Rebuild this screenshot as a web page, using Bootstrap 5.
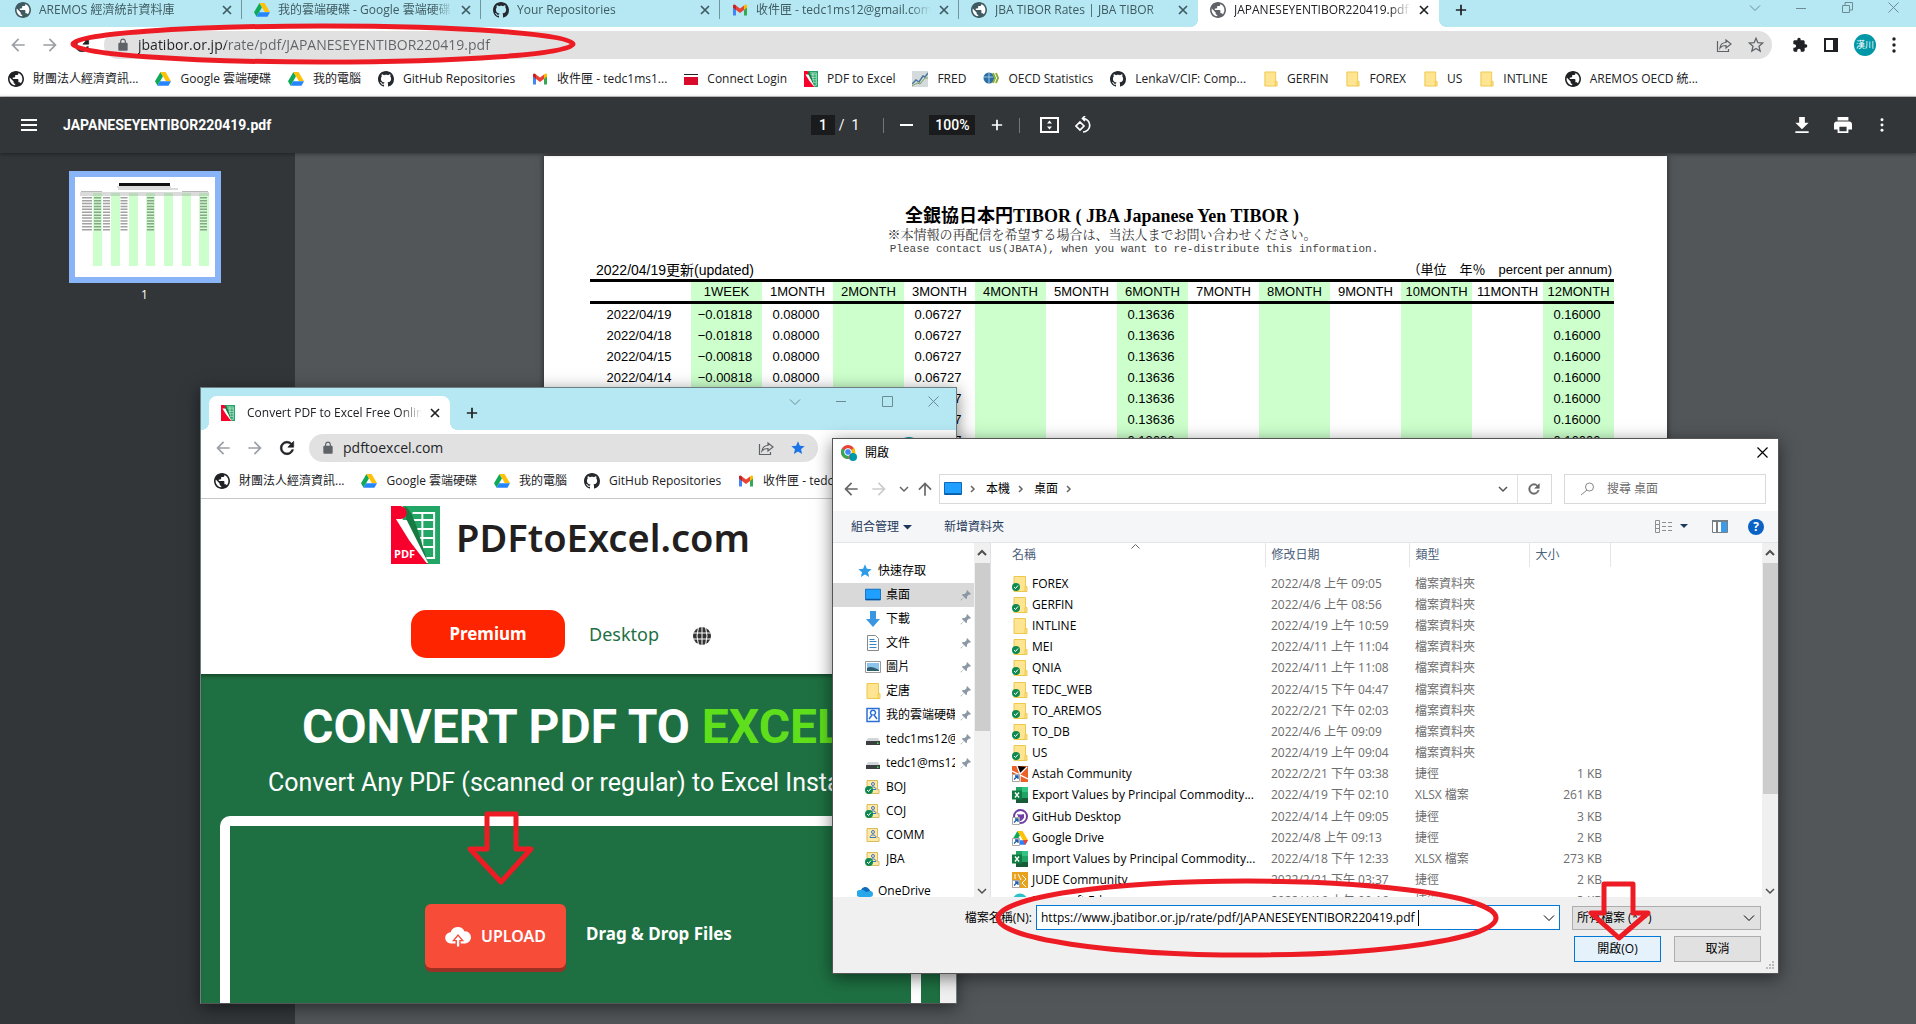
<!DOCTYPE html>
<html lang="zh-Hant">
<head>
<meta charset="utf-8">
<meta name="viewport" content="width=device-width, initial-scale=1">
<title>JAPANESEYENTIBOR220419.pdf</title>
<link href="https://cdn.jsdelivr.net/npm/bootstrap@5.3.0/dist/css/bootstrap.min.css" rel="stylesheet">
<style>
:root{--strip:#b5e8f3;--ink:#202124;--line:#d9d9d9}
body{font-family:"Open Sans","Noto Sans CJK TC",sans-serif;font-size:12px;line-height:16px;color:var(--ink);background:#525659}
svg{display:block;flex:none}
a{color:inherit;text-decoration:none}
button{font:inherit;color:inherit;border:0;background:none;padding:0}
.desk{height:100vh}
.i16{width:16px;height:16px}.i20{width:20px;height:20px}
/* browser chrome */
.strip{background:var(--strip);height:27px;padding-left:3px}
.tabx{width:239px;height:19px;padding:0 9px 0 12px;color:#3f5a61;border-right:1px solid #6f969e;white-space:nowrap}
.tabx .ttl,.tab-on .ttl{flex:1 1 0;min-width:0;overflow:hidden;-webkit-mask-image:linear-gradient(90deg,#000 88%,transparent);mask-image:linear-gradient(90deg,#000 88%,transparent)}
.tabx:nth-child(5){border-color:transparent}
.tab-on{width:241px;padding:0 10px 0 12px;background:#fff;position:relative;white-space:nowrap}
.tab-on::before,.tab-on::after{content:"";position:absolute;bottom:0;width:8px;height:8px}
.tab-on::before{left:-8px;background:radial-gradient(circle at 0 0,var(--strip) 8px,#fff 8px)}
.tab-on::after{right:-8px;background:radial-gradient(circle at 100% 0,var(--strip) 8px,#fff 8px)}
.ctl{width:46px;color:#6c8b92}
.ctl svg{margin:auto}
.bar{height:36px;background:#fff}
.omni{height:28px;border-radius:14px;background:#e1e1e1;color:#5f6368}
.omni input{border:0;background:transparent;outline:0;font-size:14px;line-height:20px;padding:0;min-width:0}
.url-split{background-image:linear-gradient(90deg,#202124 88px,#5f6368 88px)!important;-webkit-background-clip:text!important;background-clip:text!important;color:transparent}
.marks{height:34px;background:#fff;border-bottom:1px solid #c8c8c8;padding:0 8px 2px;gap:17px;white-space:nowrap;overflow:hidden}
.marks a{display:flex;align-items:center;gap:9px}
/* pdf viewer */
.viewer-bar{height:56px;background:#323639;color:#fff;font:700 14px/20px Roboto,sans-serif;box-shadow:0 1px 4px rgba(0,0,0,.4);z-index:1;position:relative}
.viewer-bar input{background:#191b1c;border:0;color:#fff;text-align:center;height:20px;padding:0;font:500 14px/20px Roboto,sans-serif}
.vsep{width:1px;height:15px;background:#73777a}
.side{width:295px;background:#323639;color:#fff;padding:18px 6px 0 0}
.thumb{border:6px solid #8ab4f8;width:152px;height:112px;background:#fff}
.paper{width:1123px;height:794px;background:#fff;margin-top:3px;box-shadow:0 0 6px rgba(0,0,0,.6);padding:50px 53px 0 46px;color:#000}
.paper h1{font:700 18px/20px "Liberation Serif","Noto Sans CJK JP",serif;margin:0}
.jp-note{font:13px/16px "Noto Serif CJK JP","Noto Sans CJK JP",sans-serif;color:#333}
.en-note{font:11px/15px "Liberation Mono",monospace;color:#444}
.cap{font:13px/18px "Liberation Sans","Noto Sans CJK JP",sans-serif;padding:0 2px 0 6px}
.cap .upd{font-size:14px}
.rates{width:1024px;table-layout:fixed;font:13px/21px "Liberation Sans",sans-serif;text-align:center;border-top:3px solid #000}
.rates th{font-weight:400;line-height:19px;border-bottom:3px solid #000;padding:0}
.rates td{padding:0 3px 0 0;height:21px}
.rates th:first-child{width:101px}
.rates :is(td,th):nth-child(even){background:#cfc}
/* floating windows */
.win{position:absolute;box-shadow:0 4px 16px rgba(0,0,0,.5)}
.win-web{left:200px;top:387px;width:757px;height:617px;border:1px solid #6d7f83;border-bottom-color:#555;background:#fff}
.win-web .strip{height:42px;padding:8px 0 0 8px}
.win-web .tab-on{border-radius:8px 8px 0 0}
.win-web .marks{height:33px;padding-left:13px}
.site-head{height:175px;padding-top:7px}
.brand{font:600 38px/58px "Noto Sans",sans-serif;color:#231f20;padding-top:2px}
.site-nav{margin-top:44px;padding-left:210px;color:#1e7042;font:18px/26px "Noto Sans",sans-serif}
.btn-prem{width:154px;height:48px;border-radius:15px;background:#ff2400;color:#fff;font-size:17px;font-weight:700}
.site-nav .earth{margin-left:34px}
.hero{background:#1e7042;color:#fff;font-family:Roboto,sans-serif;box-shadow:inset 0 4px 4px -2px rgba(0,0,0,.4);white-space:nowrap;overflow:hidden;min-width:0}
.hero h2{font:700 48px/56px Roboto,sans-serif;margin:25px 0 0 101px}
.hero p{font-size:25px;line-height:32px;margin:12px 0 0 67px}
.drop{margin:17px 19px 0 19px;border:10px solid #fff;border-radius:10px;height:260px;padding:78px 0 0 195px;font:700 17px/28px "Noto Sans",sans-serif}
.btn-up{width:141px;height:64px;border-radius:6px;background:#f64c38;box-shadow:0 4px 0 #9c3023;color:#fff;font:600 16px/22px "Noto Sans",sans-serif}
.sbar{background:#f0f0f0;width:16px;color:#505050}
.sbar i{display:block;width:15px;background:#cdcdcd}
.dlg{left:832px;top:438px;width:947px;height:536px;border:1px solid #555;background:#fff;color:#000}
.dlg input{border:0;outline:0;padding:0;background:transparent}
.box{border:1px solid var(--line);height:30px}
.cmd{height:32px;background:#f5f6f7;border-bottom:1px solid #e4e5e6;color:#1e395b;padding:0 14px}
.nav-pane{width:141px;padding-top:16px;overflow:hidden}
.nav-pane a{display:flex;align-items:center;gap:5px;height:24px;padding:0 2px 0 32px;white-space:nowrap}
.nav-pane a span{flex:1;overflow:hidden}
.nav-pane a.top{padding-left:24px}
.nav-pane a.sel{background:#d9d9d9}
.files{width:619px;table-layout:fixed;white-space:nowrap;height:369px}
.files th{font-weight:400;color:#4c607a;height:24px;padding:0 6px;border-right:1px solid #e5e5e5}
.files td{padding:0 6px;color:#6d6d6d}
.files td:first-child{color:#000}
.files th:first-child,.files td:first-child{padding-left:21px}
.files td:last-child{text-align:right;padding-right:8px}
.files tr.gap td{height:6px}
.fname{display:flex;align-items:center;gap:4px;margin-right:-4px}
.foot{background:#f0f0f0;height:76px;position:relative;padding:8px 17px 0 0}
.foot .combo{width:524px;height:25px;border:1px solid #0078d7;background:#fff}
.foot select{width:189px;height:24px;border:1px solid #adadad;background:#e1e1e1;appearance:none;padding:0 4px;border-radius:0;color:#000}
.foot .acts{margin-top:6px;gap:13px}
.foot .push{width:87px;height:26px;border:1px solid #adadad;background:#e1e1e1}
.foot .push.go{border-color:#0078d7;background:#e5f1fb}
.over{position:absolute;left:0;top:0;pointer-events:none}
</style>
<script src="https://cdn.jsdelivr.net/npm/bootstrap@5.3.0/dist/js/bootstrap.bundle.min.js"></script>
</head>
<body>
<svg width="0" height="0" class="position-absolute" aria-hidden="true">
<symbol id="globe" viewBox="2 2 20 20"><circle cx="12" cy="12" r="9" fill="#fff"/><path fill="currentColor" d="M12 2C6.48 2 2 6.48 2 12s4.48 10 10 10 10-4.480 10-10S17.520 2 12 2zm-1 17.930c-3.950-.49-7-3.850-7-7.930 0-.62.08-1.210.21-1.790L9 15v1c0 1.100.9 2 2 2v1.930zm6.900-2.540c-.26-.81-1-1.390-1.900-1.390h-1v-3c0-.55-.45-1-1-1H8v-2h2c.55 0 1-.45 1-1V7h2c1.100 0 2-.9 2-2v-.41c2.930 1.190 5 4.060 5 7.410 0 2.080-.8 3.970-2.100 5.390z"/></symbol>
<symbol id="drive" viewBox="0 0 88 80"><path fill="#0fa958" d="M30 1 0 53l14 24 30-52z"/><path fill="#ffc107" d="M30 1h28l30 52H60z"/><path fill="#2684fc" d="M28 53h60L74 77H14z"/></symbol>
<symbol id="git" viewBox="0 0 16 16"><path fill="#24292f" d="M8 0C3.580 0 0 3.580 0 8c0 3.540 2.290 6.530 5.470 7.590.4.070.55-.17.55-.38 0-.19-.01-.82-.01-1.490-2.010.37-2.530-.49-2.690-.94-.09-.23-.48-.94-.82-1.130-.28-.15-.68-.52-.01-.53.63-.01 1.080.58 1.230.82.72 1.210 1.870.87 2.330.66.070-.52.28-.87.51-1.070-1.780-.2-3.640-.89-3.640-3.950 0-.87.31-1.590.82-2.150-.08-.2-.36-1.020.08-2.120 0 0 .67-.21 2.200.82.64-.18 1.320-.27 2-.27s1.360.09 2 .27c1.530-1.040 2.200-.82 2.200-.82.44 1.100.16 1.920.08 2.120.51.56.82 1.270.82 2.150 0 3.070-1.870 3.750-3.650 3.950.29.25.54.73.54 1.480 0 1.070-.01 1.930-.01 2.200 0 .21.15.46.55.38A8.010 8.010 0 0 0 16 8c0-4.420-3.580-8-8-8z"/></symbol>
<symbol id="mail" viewBox="0 0 16 16"><path fill="#4285f4" d="M1 4v9.500h3V7z"/><path fill="#34a853" d="M12 7v6.500h3V4z"/><path fill="#ea4335" d="M4 3.500 8 6.500l4-3V8l-4 3-4-3z"/><path fill="#c5221f" d="M1 4c0-1.500 1.500-2 3-.5V8L1 5.500z"/><path fill="#fbbc04" d="M15 4c0-1.500-1.500-2-3-.5V8l3-2.500z"/></symbol>
<symbol id="pdfx" viewBox="0 0 50 58" preserveAspectRatio="none"><path fill="#22a565" d="M12 0h38v58H12z"/><path fill="none" stroke="#fff" stroke-width="2" d="M22 7h22v45H32M20 14h24M24 23h20M26 32h18M30 41h14M32 7v44"/><path fill="#167a43" d="M14 0c6 4 8 10 12 20l12 38H20z"/><path fill="#fff" d="M6 14h10l22 43H20z"/><path fill="#f8002c" d="M0 0h10c8 2 8 12 0 13H5l14 22 18 23H0z"/></symbol>
<symbol id="folder" viewBox="0 0 16 16"><path fill="#ffe591" stroke="#ecc84d" d="M2 .5h11.500v10h1.500v5H2z"/><path fill="none" stroke="#ecc84d" d="M13 10.500v5"/></symbol>
<symbol id="tick" viewBox="0 0 16 16"><circle cx="4" cy="11" r="4" fill="#0e8a50"/><path d="m2 11 1.500 1.500L6 9.500" stroke="#fff" fill="none"/></symbol>
<symbol id="fshare" viewBox="0 0 16 16"><path fill="#ffe9a5" stroke="#d9bb5d" d="M2 1.500h10.500v9H14v4H2z"/><circle cx="8" cy="5" r="1.500" fill="none" stroke="#3b78c9"/><path fill="none" stroke="#3b78c9" d="M5 10.500c0-3.500 6-3.500 6 0z"/></symbol>
<symbol id="desk" viewBox="0 0 18 14"><path fill="#1f9fff" stroke="#0b69b7" d="M.5.5h17v12H.5z"/><path stroke="#0957a0" stroke-width="1.500" d="M1 12h16"/></symbol>
<symbol id="pin" viewBox="0 0 12 12"><path fill="#8b98a3" d="M7 1l4 4-1 .7-1-.2-2 2 0 2L6 10 4 8l-3 3.500L.5 11 4 8 2 6l.7-1h2l2-2L6.500 2z"/></symbol>
<symbol id="disk" viewBox="0 0 16 16"><path fill="#d3d6d9" d="m3 7-2 3h14l-2-3z"/><path fill="#3b3f42" d="M1 10h14v4H1z"/><path fill="#3ef04a" d="M12 11.500h1.500V13H12z"/></symbol>
<symbol id="xls" viewBox="0 0 16 16"><path fill="#21a366" d="M4 0h12v16H4z"/><path fill="#33c481" d="M10 0h6v5h-6z"/><path fill="#185c37" d="M4 11h12v5H4z"/><path fill="#107c41" d="M0 3.500h10v9H0z"/><path stroke="#fff" stroke-width="1.400" d="m3 5.500 4 5m0-5-4 5"/></symbol>
<symbol id="lnk" viewBox="0 0 16 16"><path fill="#fff" stroke="#a9a9a9" d="M.5 8.500h7v7h-7z"/><path fill="none" stroke="#1d5fa8" stroke-width="1.300" d="M2 13.500 5.500 10M3 10h3v3"/></symbol>
<symbol id="x" viewBox="0 0 10 10"><path stroke="currentColor" stroke-width="1.700" d="m1 1 8 8m0-8L1 9"/></symbol>
<symbol id="plus" viewBox="0 0 14 14"><path stroke="currentColor" stroke-width="2" d="M7 1v12M1 7h12"/></symbol>
<symbol id="back" viewBox="0 0 24 24"><path fill="currentColor" d="M20 11H7.800l5.600-5.600L12 4l-8 8 8 8 1.400-1.400L7.800 13H20z"/></symbol>
<symbol id="fwd" viewBox="0 0 24 24"><path fill="currentColor" d="m12 4-1.400 1.400 5.600 5.600H4v2h12.200l-5.600 5.600L12 20l8-8z"/></symbol>
<symbol id="reload" viewBox="0 0 24 24"><path fill="currentColor" stroke="currentColor" stroke-width=".8" d="M17.650 6.350C16.200 4.900 14.210 4 12 4c-4.420 0-7.990 3.580-7.990 8s3.570 8 7.990 8c3.730 0 6.840-2.550 7.730-6h-2.080c-.82 2.330-3.040 4-5.650 4-3.310 0-6-2.690-6-6s2.690-6 6-6c1.660 0 3.140.69 4.220 1.780L13 11h7V4z"/></symbol>
<symbol id="lock" viewBox="0 0 24 24"><path fill="currentColor" d="M18 8h-1V6c0-2.760-2.240-5-5-5S7 3.240 7 6v2H6c-1.100 0-2 .9-2 2v10c0 1.100.9 2 2 2h12c1.100 0 2-.9 2-2V10c0-1.100-.9-2-2-2zM9 6c0-1.660 1.340-3 3-3s3 1.340 3 3v2H9z"/></symbol>
<symbol id="share" viewBox="0 0 16 16"><path fill="none" stroke="currentColor" stroke-width="1.200" d="M1.500 4v10.500h11V12M4 11c.5-4 2.500-5.500 6-5.500V3l5 4-5 4V8.500C7 8.500 5.500 9 4 11z"/></symbol>
<symbol id="star" viewBox="0 0 24 24"><path d="M12 17.300 18.200 21l-1.700-7L22 9.200l-7.200-.6L12 2 9.200 8.600 2 9.200 7.500 14l-1.700 7z"/></symbol>
<symbol id="puzzle" viewBox="0 0 24 24"><path fill="currentColor" d="M20.500 11H19V7c0-1.100-.9-2-2-2h-4V3.500a2.500 2.500 0 0 0-5 0V5H4c-1.100 0-2 .9-2 2v3.800h1.500a2.700 2.700 0 0 1 0 5.400H2V20c0 1.100.9 2 2 2h3.800v-1.500a2.700 2.700 0 0 1 5.400 0V22H17c1.100 0 2-.9 2-2v-4h1.500a2.500 2.500 0 0 0 0-5z"/></symbol>
<symbol id="dots" viewBox="0 0 4 16"><circle cx="2" cy="2" r="1.700" fill="currentColor"/><circle cx="2" cy="8" r="1.700" fill="currentColor"/><circle cx="2" cy="14" r="1.700" fill="currentColor"/></symbol>
<symbol id="down" viewBox="0 0 12 12"><path fill="none" stroke="currentColor" stroke-width="1.500" d="m2 4 4 4 4-4"/></symbol>
<symbol id="thin" viewBox="0 0 12 12"><path fill="none" stroke="currentColor" d="m1 3.500 5 5 5-5"/></symbol>
<symbol id="up" viewBox="0 0 12 12"><path fill="none" stroke="currentColor" stroke-width="2" d="m2 8 4-4 4 4"/></symbol>
<symbol id="right" viewBox="0 0 12 12"><path fill="none" stroke="#666" stroke-width="1.500" d="m5 3 3 3-3 3"/></symbol>
</svg>

<div class="desk d-flex flex-column overflow-hidden position-relative">
  <header class="strip d-flex">
    <div class="tabx d-flex align-items-center gap-2"><svg class="i16"><use href="#globe"/></svg><span class="ttl">AREMOS 經濟統計資料庫</span><button aria-label="關閉"><svg width="10" height="10"><use href="#x"/></svg></button></div>
    <div class="tabx d-flex align-items-center gap-2"><svg class="i16"><use href="#drive"/></svg><span class="ttl">我的雲端硬碟 - Google 雲端硬碟</span><button aria-label="關閉"><svg width="10" height="10"><use href="#x"/></svg></button></div>
    <div class="tabx d-flex align-items-center gap-2"><svg class="i16"><use href="#git"/></svg><span class="ttl">Your Repositories</span><button aria-label="關閉"><svg width="10" height="10"><use href="#x"/></svg></button></div>
    <div class="tabx d-flex align-items-center gap-2"><svg class="i16"><use href="#mail"/></svg><span class="ttl">收件匣 - tedc1ms12@gmail.com</span><button aria-label="關閉"><svg width="10" height="10"><use href="#x"/></svg></button></div>
    <div class="tabx d-flex align-items-center gap-2"><svg class="i16"><use href="#globe"/></svg><span class="ttl">JBA TIBOR Rates | JBA TIBOR</span><button aria-label="關閉"><svg width="10" height="10"><use href="#x"/></svg></button></div>
    <div class="tab-on d-flex align-items-center gap-2 pb-2"><svg class="i16" color="#5f6368"><use href="#globe"/></svg><span class="ttl">JAPANESEYENTIBOR220419.pdf</span><button aria-label="關閉"><svg width="10" height="10"><use href="#x"/></svg></button></div>
    <button class="ms-3 pb-2" aria-label="新分頁"><svg width="12" height="12"><use href="#plus"/></svg></button>
    <div class="ms-auto d-flex pb-2 mb-1">
      <button class="ctl" aria-label="搜尋分頁"><svg width="12" height="12"><use href="#thin"/></svg></button>
      <button class="ctl" aria-label="最小化"><svg width="10" height="10"><path stroke="currentColor" d="M0 5.500h10"/></svg></button>
      <button class="ctl" aria-label="還原"><svg width="11" height="11"><path fill="none" stroke="currentColor" d="M.5 3.500h7v7h-7zM3 3V.5h7.500V8H8"/></svg></button>
      <button class="ctl" aria-label="關閉視窗"><svg width="11" height="11"><path stroke="currentColor" d="m.5.5 10 10m0-10-10 10"/></svg></button>
    </div>
  </header>
  <div class="bar d-flex align-items-center px-2">
    <svg class="i20 me-1" color="#9aa0a6"><use href="#back"/></svg>
    <svg class="i20 ms-2 me-2" color="#9aa0a6"><use href="#fwd"/></svg>
    <svg class="i20 ms-1 me-2"><use href="#reload"/></svg>
    <div class="omni d-flex align-items-center flex-fill px-2 ms-1 me-1">
      <svg width="14" height="14" class="ms-1 me-2"><use href="#lock"/></svg>
      <input class="flex-fill url-split" aria-label="網址" value="jbatibor.or.jp/rate/pdf/JAPANESEYENTIBOR220419.pdf">
      <svg class="i16 me-3"><use href="#share"/></svg>
      <svg class="i16" fill="none" stroke="currentColor" stroke-width="2"><use href="#star"/></svg>
    </div>
    <svg class="i16 ms-3"><use href="#puzzle"/></svg>
    <svg width="14" height="14" class="mx-3"><path fill="none" stroke="#202124" stroke-width="2" d="M1 1h12v12H1z"/><path fill="#202124" d="M9 1h4v12H9z"/></svg>
    <svg width="22" height="22"><circle cx="11" cy="11" r="11" fill="#0097a7"/><text x="11" y="14" text-anchor="middle" font-size="9" fill="#fff">漢川</text></svg>
    <svg width="4" height="16" class="ms-3 me-2"><use href="#dots"/></svg><span class="me-1"></span>
  </div>
  <nav class="marks d-flex align-items-center">
    <a href="#"><svg class="i16"><use href="#globe"/></svg>財團法人經濟資訊...</a>
    <a href="#"><svg class="i16"><use href="#drive"/></svg>Google 雲端硬碟</a>
    <a href="#"><svg class="i16"><use href="#drive"/></svg>我的電腦</a>
    <a href="#"><svg class="i16"><use href="#git"/></svg>GitHub Repositories</a>
    <a href="#"><svg class="i16"><use href="#mail"/></svg>收件匣 - tedc1ms1...</a>
    <a href="#"><svg width="14" height="16"><path fill="#222" d="M0 3h14v1H0z"/><path fill="#d80b2b" d="M0 6h14v8H0z"/></svg>Connect Login</a>
    <a href="#"><svg width="14" height="16"><use href="#pdfx"/></svg>PDF to Excel</a>
    <a href="#"><svg class="i16"><path fill="#d5dadd" d="M0 0h16v16H0z"/><path fill="none" stroke="#49799a" stroke-width="1.500" d="m0 13 4-4 3 2 4-6 2 1 3-4"/><path fill="none" stroke="#7aa05a" d="m0 15 5-3 3 1 5-6 3 0"/></svg>FRED</a>
    <a href="#"><svg class="i16"><circle cx="6" cy="7" r="5.500" fill="#2a6ea6"/><path fill="none" stroke="#9cc4e0" d="M1 6h9M6 2v10"/><path fill="none" stroke="#8cae3c" stroke-width="2" d="m10 2 2 5-2 5m3-10 2 5-2 5"/></svg>OECD Statistics</a>
    <a href="#"><svg class="i16"><use href="#git"/></svg>LenkaV/CIF: Comp...</a>
    <a href="#"><svg width="15" height="16"><use href="#folder"/></svg>GERFIN</a>
    <a href="#"><svg width="15" height="16"><use href="#folder"/></svg>FOREX</a>
    <a href="#"><svg width="15" height="16"><use href="#folder"/></svg>US</a>
    <a href="#"><svg width="15" height="16"><use href="#folder"/></svg>INTLINE</a>
    <a href="#"><svg class="i16"><use href="#globe"/></svg>AREMOS OECD 統...</a>
  </nav>
  <div class="viewer-bar d-flex align-items-center flex-shrink-0">
    <div class="d-flex align-items-center flex-fill w-50"><button class="ms-3 me-4" aria-label="選單"><svg width="23" height="14"><path stroke="#fff" stroke-width="2" d="M5 2h16M5 7h16M5 12h16"/></svg></button>JAPANESEYENTIBOR220419.pdf</div>
    <div class="d-flex align-items-center flex-shrink-0 me-2">
      <input style="width:24px" aria-label="頁碼" value="1"><span class="ms-1 fw-normal">/&nbsp; 1</span>
      <span class="vsep ms-4 me-3"></span>
      <button aria-label="縮小"><svg width="13" height="14"><path stroke="#fff" stroke-width="2" d="M0 7h13"/></svg></button>
      <input class="mx-3" style="width:46px" aria-label="縮放" value="100%">
      <button class="me-3" aria-label="放大"><svg width="12" height="12"><use href="#plus"/></svg></button>
      <span class="vsep me-3"></span>
      <button class="ms-1 me-3" aria-label="符合頁面"><svg width="19" height="16"><path fill="none" stroke="#fff" stroke-width="2" d="M1 1h17v14H1z"/><path fill="#fff" d="M9.500 3.500 12 6.500H7zM7 9.500h5l-2.500 3z"/></svg></button>
      <button aria-label="旋轉"><svg width="18" height="18"><path fill="none" stroke="#fff" stroke-width="1.700" d="m5 6 4 4-4 4-4-4zM8 2.500a6.500 6.500 0 1 1 0 13.500M10 0 7.500 2.500 10 5"/></svg></button>
    </div>
    <div class="d-flex align-items-center justify-content-end flex-fill w-50 gap-4 pe-4">
      <button aria-label="下載"><svg width="16" height="18" viewBox="4 2 16 19"><path fill="#fff" d="M19 9h-4V3H9v6H5l7 7zM5 18v2h14v-2z"/></svg></button>
      <button aria-label="列印"><svg width="18" height="18" viewBox="2 2 20 20"><path fill="#fff" d="M19 8H5c-1.700 0-3 1.300-3 3v6h4v4h12v-4h4v-6c0-1.700-1.300-3-3-3zm-3 11H8v-5h8zM18 3H6v4h12z"/></svg></button>
      <button class="ps-1 pe-2" aria-label="更多"><svg width="4" height="14"><use href="#dots"/></svg></button>
    </div>
  </div>
  <div class="d-flex flex-fill">
    <aside class="side d-flex flex-column align-items-center flex-shrink-0">
      <div class="thumb flex-shrink-0"><svg width="140" height="100"><path fill="#cfc" d="M18 16h9v73h-9zm18 0h9v73h-9zm18 0h9v73h-9zm17 0h9v73h-9zm18 0h9v73h-9zm18 0h9v73h-9zm17 0h10v73h-10z"/><path stroke="#111" stroke-width="3" d="M44 7.500h51"/><path stroke="#999" stroke-width=".7" d="M42 10h54M43 12h60M6 14.500h21M107 14.500h26M5 16h129M5 18h129"/><g stroke="#555" stroke-opacity=".55" stroke-dasharray="1.500 1.400"><path stroke-width="10" d="M12 20v34"/><path stroke-width="7" d="M22.500 20v34M31.500 20v34M49 20v34M75.500 20v34M128.500 20v34"/></g></svg></div>
      <span class="mt-1">1</span>
    </aside>
    <main class="d-flex flex-fill justify-content-center align-items-start">
      <article class="paper" lang="ja">
        <h1 class="text-center">全銀協日本円TIBOR ( JBA Japanese Yen TIBOR )</h1>
        <div class="jp-note text-center">※本情報の再配信を希望する場合は、当法人までお問い合わせください。</div>
        <div class="en-note text-center ps-5 ms-3">Please contact us(JBATA), when you want to re-distribute this information.</div>
        <div class="cap d-flex justify-content-between pt-1"><span class="upd">2022/04/19更新(updated)</span><span>（単位　年％　percent per annum)</span></div>
        <table class="rates">
          <thead><tr><th></th><th>1WEEK</th><th>1MONTH</th><th>2MONTH</th><th>3MONTH</th><th>4MONTH</th><th>5MONTH</th><th>6MONTH</th><th>7MONTH</th><th>8MONTH</th><th>9MONTH</th><th>10MONTH</th><th>11MONTH</th><th>12MONTH</th></tr></thead>
          <tbody>
          <tr><td>2022/04/19</td><td>−0.01818</td><td>0.08000</td><td></td><td>0.06727</td><td></td><td></td><td>0.13636</td><td></td><td></td><td></td><td></td><td></td><td>0.16000</td></tr>
          <tr><td>2022/04/18</td><td>−0.01818</td><td>0.08000</td><td></td><td>0.06727</td><td></td><td></td><td>0.13636</td><td></td><td></td><td></td><td></td><td></td><td>0.16000</td></tr>
          <tr><td>2022/04/15</td><td>−0.00818</td><td>0.08000</td><td></td><td>0.06727</td><td></td><td></td><td>0.13636</td><td></td><td></td><td></td><td></td><td></td><td>0.16000</td></tr>
          <tr><td>2022/04/14</td><td>−0.00818</td><td>0.08000</td><td></td><td>0.06727</td><td></td><td></td><td>0.13636</td><td></td><td></td><td></td><td></td><td></td><td>0.16000</td></tr>
          <tr><td></td><td></td><td></td><td></td><td>0.06727</td><td></td><td></td><td>0.13636</td><td></td><td></td><td></td><td></td><td></td><td>0.16000</td></tr>
          <tr><td></td><td></td><td></td><td></td><td>0.06727</td><td></td><td></td><td>0.13636</td><td></td><td></td><td></td><td></td><td></td><td>0.16000</td></tr>
          <tr><td></td><td></td><td></td><td></td><td>0.06727</td><td></td><td></td><td>0.13636</td><td></td><td></td><td></td><td></td><td></td><td>0.16000</td></tr>
          </tbody>
        </table>
      </article>
    </main>
  </div>

  <section class="win win-web d-flex flex-column overflow-hidden">
    <div class="strip d-flex flex-shrink-0">
      <div class="tab-on d-flex align-items-center gap-2"><svg width="14" height="16"><use href="#pdfx"/></svg><span class="ttl ps-1">Convert PDF to Excel Free Online</span><button aria-label="關閉"><svg width="10" height="10"><use href="#x"/></svg></button></div>
      <button class="ms-3" aria-label="新分頁"><svg width="12" height="12"><use href="#plus"/></svg></button>
      <div class="ms-auto d-flex pb-4">
        <button class="ctl" aria-label="搜尋分頁"><svg width="12" height="12"><use href="#thin"/></svg></button>
        <button class="ctl" aria-label="最小化"><svg width="10" height="10"><path stroke="currentColor" d="M0 5.500h10"/></svg></button>
        <button class="ctl" aria-label="最大化"><svg width="11" height="11"><path fill="none" stroke="currentColor" d="M.5.500h10v10H.5z"/></svg></button>
        <button class="ctl" aria-label="關閉視窗"><svg width="11" height="11"><path stroke="currentColor" d="m.5.500 10 10m0-10-10 10"/></svg></button>
      </div>
    </div>
    <div class="bar d-flex align-items-center px-2 flex-shrink-0">
      <svg class="i20 ms-1 me-2" color="#9aa0a6"><use href="#back"/></svg>
      <svg class="i20 ms-1 me-2" color="#9aa0a6"><use href="#fwd"/></svg>
      <svg class="i20 ms-1 me-2"><use href="#reload"/></svg>
      <div class="omni d-flex align-items-center flex-fill px-2 ms-1 me-3">
        <svg width="14" height="14" class="ms-1 me-2"><use href="#lock"/></svg>
        <input class="flex-fill text-dark" aria-label="網址" value="pdftoexcel.com">
        <svg class="i16 me-3"><use href="#share"/></svg>
        <svg class="i16 me-1" fill="#1a73e8"><use href="#star"/></svg>
      </div>
      <svg class="i16 me-5"><use href="#puzzle"/></svg>
      <svg width="22" height="22" class="me-3"><circle cx="11" cy="11" r="11" fill="#0097a7"/></svg>
      <svg width="4" height="16" class="ms-1 me-1"><use href="#dots"/></svg>
    </div>
    <nav class="marks d-flex align-items-center flex-shrink-0">
      <a href="#"><svg class="i16"><use href="#globe"/></svg>財團法人經濟資訊...</a>
      <a href="#"><svg class="i16"><use href="#drive"/></svg>Google 雲端硬碟</a>
      <a href="#"><svg class="i16"><use href="#drive"/></svg>我的電腦</a>
      <a href="#"><svg class="i16"><use href="#git"/></svg>GitHub Repositories</a>
      <a href="#"><svg class="i16"><use href="#mail"/></svg>收件匣 - tedc1ms1...</a>
    </nav>
    <div class="d-flex flex-fill">
      <div class="flex-fill d-flex flex-column" style="min-width:0">
        <div class="site-head flex-shrink-0">
          <div class="d-flex justify-content-center align-items-start"><svg width="49" height="58"><use href="#pdfx" width="49" height="58"/><text x="3" y="52" font-size="11" font-weight="700" fill="#fff">PDF</text></svg><span class="brand ms-3">PDFtoExcel.com</span></div>
          <div class="site-nav d-flex align-items-center"><button class="btn-prem">Premium</button><a href="#" class="ms-4">Desktop</a>
          <svg width="18" height="18" class="mt-1 earth"><circle cx="9" cy="9" r="9" fill="#333"/><path fill="none" stroke="#fff" d="M0 6h18M0 12h18M9 0v18M5.500 0q-3 9 0 18M12.500 0q3 9 0 18"/></svg></div>
        </div>
        <div class="hero flex-fill">
          <h2>CONVERT PDF TO <span style="color:#5fdf1c">EXCEL</span></h2>
          <p>Convert Any PDF (scanned or regular) to Excel Instantly</p>
          <div class="drop d-flex align-items-start">
            <button class="btn-up d-flex align-items-center justify-content-center gap-2"><svg width="28" height="24" viewBox="0 -2 30 26"><path fill="#fff" d="M6 19a6 6 0 0 1 0-12 8 8 0 0 1 15-1 6.500 6.500 0 0 1 1 13z"/><path fill="#fff" stroke="#f64c38" stroke-width="1.500" d="m14 10 5 6h-3v7h-4v-7H9z"/></svg>UPLOAD</button><span class="ms-3 ps-1 mt-3">Drag &amp; Drop Files</span>
          </div>
        </div>
      </div>
      <div class="sbar d-flex flex-column justify-content-end align-items-center pb-1"><svg width="8" height="6"><path fill="#505050" d="M0 0h8L4 5z"/></svg></div>
    </div>
  </section>

  <section class="win dlg d-flex flex-column overflow-hidden">
    <div class="d-flex align-items-center ps-2 pe-2 pt-1">
      <svg class="i16" viewBox="0 0 16 16"><circle cx="7" cy="7" r="7" fill="#ea4335"/><path fill="#fbbc04" d="M7 7l6-4a7 7 0 0 1-5 11z"/><path fill="#34a853" d="M7 7 1 3.500A7 7 0 0 0 7 14z"/><circle cx="7" cy="7" r="3.400" fill="#4285f4" stroke="#fff"/><circle cx="12" cy="12" r="4" fill="#0097a7"/></svg>
      <span class="ms-1 ps-1">開啟</span>
      <button class="ms-auto py-1" aria-label="關閉"><svg width="13" height="11"><path stroke="#000" stroke-width="1.200" d="m.5.500 10 10m0-10-10 10"/></svg></button>
    </div>
    <div class="d-flex align-items-center mt-2 ps-2 pt-1" style="color:#666;padding-right:12px;margin-bottom:7px">
      <svg class="i20"><use href="#back"/></svg>
      <svg class="i20 mx-2 ms-2" color="#ccc"><use href="#fwd"/></svg>
      <svg width="14" height="12" class="me-1"><use href="#down"/></svg>
      <svg class="i20 me-1"><use href="#back" transform="rotate(90 10 10)"/></svg>
      <div class="box d-flex align-items-center flex-fill text-black">
        <svg width="18" height="14" class="ms-1"><use href="#desk"/></svg><svg width="12" height="12" class="ms-1"><use href="#right"/></svg><span class="ms-2 me-1">本機</span><svg width="12" height="12"><use href="#right"/></svg><span class="ms-2 me-1">桌面</span><svg width="12" height="12"><use href="#right"/></svg>
        <svg width="12" height="12" class="ms-auto me-2" color="#555"><use href="#down"/></svg>
        <button class="h-100 border-start px-2" style="width:34px" aria-label="重新整理"><svg class="i16" color="#666"><use href="#reload"/></svg></button>
      </div>
      <div class="box d-flex align-items-center px-3" style="width:202px;margin-left:12px"><svg width="14" height="14" class="me-2 flex-shrink-0"><circle cx="8.500" cy="5" r="4" fill="none" stroke="#888"/><path stroke="#888" d="M6 8 0 13"/></svg><input class="ms-1 w-75" aria-label="搜尋" value="搜尋 桌面" style="color:#6d6d6d"></div>
    </div>
    <div class="cmd d-flex align-items-center flex-shrink-0">
      <button class="d-flex align-items-center gap-1 ps-1">組合管理 <svg width="9" height="6"><path fill="#1e395b" d="M0 1h9L4.500 5.500z"/></svg></button><button class="ms-4 ps-2">新增資料夾</button>
      <svg width="17" height="14" class="ms-auto"><path fill="none" stroke="#8a8f94" d="M.5.500h4v12h-4zM.5 4.500h4M.5 8.500h4"/><path stroke="#8a8f94" stroke-dasharray="4 2" d="M7 2.500h10M7 6.500h10M7 10.500h10"/></svg>
      <svg width="8" height="5" class="ms-2 me-4"><path fill="#1e395b" d="M0 0h8L4 4z"/></svg>
      <svg width="16" height="13" class="me-3"><path fill="#fff" stroke="#777f86" d="M.5.500h15v12H.5z"/><path stroke="#777f86" stroke-width="2" d="M0 1h16M5 2v10"/><path fill="#3b9be8" d="M9 2h6v10H9z"/></svg>
      <svg width="16" height="16" class="ms-1"><circle cx="8" cy="8" r="8" fill="#0a62c4"/><text x="8" y="12" text-anchor="middle" font-size="12" font-weight="700" fill="#fff">?</text></svg>
    </div>
    <div class="d-flex flex-fill overflow-hidden" style="min-height:0">
      <nav class="nav-pane flex-shrink-0">
        <a href="#" class="top"><svg class="i16" fill="#2d9be8"><use href="#star"/></svg><span>快速存取</span></a>
        <a href="#" class="sel"><svg width="16" height="14"><use href="#desk"/></svg><span>桌面</span><svg width="12" height="12"><use href="#pin"/></svg></a>
        <a href="#"><svg class="i16"><path fill="#3a96e0" d="M5 0h6v8h4l-7 8-7-8h4z"/></svg><span>下載</span><svg width="12" height="12"><use href="#pin"/></svg></a>
        <a href="#"><svg class="i16"><path fill="#fff" stroke="#888" d="M2.500.500h8l3 3v12h-11z"/><path stroke="#3b84c4" d="M4.500 4.500h5m-5 2h7m-7 3h7m-7 3h7"/></svg><span>文件</span><svg width="12" height="12"><use href="#pin"/></svg></a>
        <a href="#"><svg class="i16"><path fill="#fff" stroke="#999" d="M.5 2.500h15v11H.5z"/><path fill="#8cc4ee" d="M2 4h12v8H2z"/><path fill="#2f5f6e" d="M2 9q4-3 12 2v1H2z"/></svg><span>圖片</span><svg width="12" height="12"><use href="#pin"/></svg></a>
        <a href="#"><svg class="i16"><use href="#folder"/></svg><span>定唐</span><svg width="12" height="12"><use href="#pin"/></svg></a>
        <a href="#"><svg class="i16"><path fill="#fff" stroke="#2b6fd6" stroke-width="1.500" d="M2 1.500h12v13H2z"/><path fill="none" stroke="#2b6fd6" stroke-width="1.500" d="m4 12 3-4a2.500 2.500 0 1 1 2 0l3 4"/></svg><span>我的雲端硬碟</span><svg width="12" height="12"><use href="#pin"/></svg></a>
        <a href="#"><svg class="i16"><use href="#disk"/></svg><span>tedc1ms12@</span><svg width="12" height="12"><use href="#pin"/></svg></a>
        <a href="#"><svg class="i16"><use href="#disk"/></svg><span>tedc1@ms12</span><svg width="12" height="12"><use href="#pin"/></svg></a>
        <a href="#"><svg class="i16"><use href="#fshare"/><use href="#tick"/></svg><span>BOJ</span></a>
        <a href="#"><svg class="i16"><use href="#fshare"/><use href="#tick"/></svg><span>COJ</span></a>
        <a href="#"><svg class="i16"><use href="#fshare"/></svg><span>COMM</span></a>
        <a href="#"><svg class="i16"><use href="#fshare"/><use href="#tick"/></svg><span>JBA</span></a>
        <a href="#" class="top mt-2"><svg class="i16"><path fill="#0f6cbd" d="M4 7a4.500 4.500 0 0 1 8-1l2 3H2z"/><path fill="#28a8ea" d="M3 14a3.500 3.500 0 0 1 0-7q3-1 6 2l4-1a3 3 0 0 1 0 6z"/></svg><span>OneDrive</span></a>
      </nav>
      <div class="sbar d-flex flex-column align-items-center pt-1"><svg width="10" height="12" viewBox="1 0 10 12"><use href="#up" width="12" height="12"/></svg><i class="mt-1" style="height:168px"></i><svg width="12" height="12" class="mt-auto mb-0"><use href="#down"/></svg></div>
      <div class="flex-fill overflow-hidden border-start position-relative">
        <svg width="10" height="5" class="position-absolute" style="left:140px;top:1px"><path fill="none" stroke="#666" d="m.5 4.500 4-4 4 4"/></svg>
        <table class="files">
          <colgroup><col style="width:274px"><col style="width:144px"><col style="width:120px"><col style="width:81px"></colgroup>
          <thead><tr><th>名稱</th><th>修改日期</th><th>類型</th><th>大小</th></tr></thead>
          <tbody>
          <tr class="gap"><td colspan="4"></td></tr>
          <tr><td><span class="fname"><svg class="i16"><use href="#folder"/><use href="#tick"/></svg>FOREX</span></td><td>2022/4/8 上午 09:05</td><td>檔案資料夾</td><td></td></tr>
          <tr><td><span class="fname"><svg class="i16"><use href="#folder"/><use href="#tick"/></svg>GERFIN</span></td><td>2022/4/6 上午 08:56</td><td>檔案資料夾</td><td></td></tr>
          <tr><td><span class="fname"><svg class="i16"><use href="#folder"/></svg>INTLINE</span></td><td>2022/4/19 上午 10:59</td><td>檔案資料夾</td><td></td></tr>
          <tr><td><span class="fname"><svg class="i16"><use href="#folder"/><use href="#tick"/></svg>MEI</span></td><td>2022/4/11 上午 11:04</td><td>檔案資料夾</td><td></td></tr>
          <tr><td><span class="fname"><svg class="i16"><use href="#folder"/><use href="#tick"/></svg>QNIA</span></td><td>2022/4/11 上午 11:08</td><td>檔案資料夾</td><td></td></tr>
          <tr><td><span class="fname"><svg class="i16"><use href="#folder"/><use href="#tick"/></svg>TEDC_WEB</span></td><td>2022/4/15 下午 04:47</td><td>檔案資料夾</td><td></td></tr>
          <tr><td><span class="fname"><svg class="i16"><use href="#folder"/><use href="#tick"/></svg>TO_AREMOS</span></td><td>2022/2/21 下午 02:03</td><td>檔案資料夾</td><td></td></tr>
          <tr><td><span class="fname"><svg class="i16"><use href="#folder"/><use href="#tick"/></svg>TO_DB</span></td><td>2022/4/6 上午 09:09</td><td>檔案資料夾</td><td></td></tr>
          <tr><td><span class="fname"><svg class="i16"><use href="#folder"/><use href="#tick"/></svg>US</span></td><td>2022/4/19 上午 09:04</td><td>檔案資料夾</td><td></td></tr>
          <tr><td><span class="fname"><svg class="i16"><path fill="#e8622a" d="M0 0h16v16H0z"/><path stroke="#fff" stroke-width="1.300" d="M0 5l16 8M5 0l3 8 7-7M8 8v8"/><use href="#lnk"/></svg>Astah Community</span></td><td>2022/2/21 下午 03:38</td><td>捷徑</td><td>1 KB</td></tr>
          <tr><td><span class="fname"><svg class="i16"><use href="#xls"/></svg>Export Values by Principal Commodity...</span></td><td>2022/4/19 下午 02:10</td><td>XLSX 檔案</td><td>261 KB</td></tr>
          <tr><td><span class="fname"><svg class="i16"><circle cx="8.500" cy="7.500" r="6.500" fill="#fff" stroke="#6f3fa3" stroke-width="2"/><path fill="#6f3fa3" d="M5 5l2 .5h3L12 5v4l-3 3H8z"/><use href="#lnk"/></svg>GitHub Desktop</span></td><td>2022/4/14 上午 09:05</td><td>捷徑</td><td>3 KB</td></tr>
          <tr><td><span class="fname"><svg class="i16"><use href="#drive"/><path fill="#ea4335" d="m11 10 5 0-3 5z"/><use href="#lnk"/></svg>Google Drive</span></td><td>2022/4/8 上午 09:13</td><td>捷徑</td><td>2 KB</td></tr>
          <tr><td><span class="fname"><svg class="i16"><use href="#xls"/></svg>Import Values by Principal Commodity...</span></td><td>2022/4/18 下午 12:33</td><td>XLSX 檔案</td><td>273 KB</td></tr>
          <tr><td><span class="fname"><svg class="i16"><path fill="#e9a21e" d="M0 0h16v16H0z"/><path fill="none" stroke="#fff" d="M3 2v5M6 2l3 6m1-5 4 4-4 4 4 4"/><use href="#lnk"/></svg>JUDE Community</span></td><td>2022/2/21 下午 03:37</td><td>捷徑</td><td>2 KB</td></tr>
          <tr><td><span class="fname"><svg class="i16"><circle cx="8" cy="8" r="7.500" fill="#2fc1c9"/></svg>Microsoft Edge</span></td><td>2022/4/16 上午 09:16</td><td>捷徑</td><td>3 KB</td></tr>
          </tbody>
        </table>
      </div>
      <div class="sbar d-flex flex-column align-items-center pt-1"><svg width="10" height="12" viewBox="1 0 10 12"><use href="#up" width="12" height="12"/></svg><i class="mt-1" style="height:231px"></i><svg width="12" height="12" class="mt-auto mb-0"><use href="#down"/></svg></div>
    </div>
    <form class="foot flex-shrink-0">
      <div class="d-flex align-items-center justify-content-end">
        <label for="fn" class="me-1">檔案名稱(N):</label>
        <div class="combo d-flex align-items-center px-1"><input id="fn" class="flex-fill" value="https://www.jbatibor.or.jp/rate/pdf/JAPANESEYENTIBOR220419.pdf"><svg width="12" height="12"><use href="#thin"/></svg></div>
        <div class="position-relative" style="margin-left:12px"><select aria-label="檔案類型"><option>所有檔案 (*.*)</option></select><svg width="12" height="12" class="position-absolute top-50 end-0 translate-middle"><use href="#thin"/></svg></div>
      </div>
      <div class="acts d-flex justify-content-end"><button type="button" class="push go">開啟(O)</button><button type="button" class="push">取消</button></div>
      <svg width="8" height="8" class="position-absolute bottom-0 end-0 m-1" fill="#bbb"><path d="M6 0h2v2H6zM3 3h2v2H3zM6 3h2v2H6zM0 6h2v2H0zM3 6h2v2H3zM6 6h2v2H6z"/></svg>
    </form>
  </section>

  <svg class="over" width="1916" height="1024" fill="none" stroke="#ed1c24" stroke-width="5">
    <path stroke="#000" stroke-width="1" d="M1418.500 910v16"/>
    <ellipse cx="323" cy="44" rx="250" ry="18"/>
    <ellipse cx="1247" cy="918" rx="249" ry="37"/>
    <path stroke-linejoin="round" d="M487 814h29v35h15l-30 33-31-33h17zM1604 884h29v29h15l-29 25-28-25h13z"/>
  </svg>
</div>
</body>
</html>
